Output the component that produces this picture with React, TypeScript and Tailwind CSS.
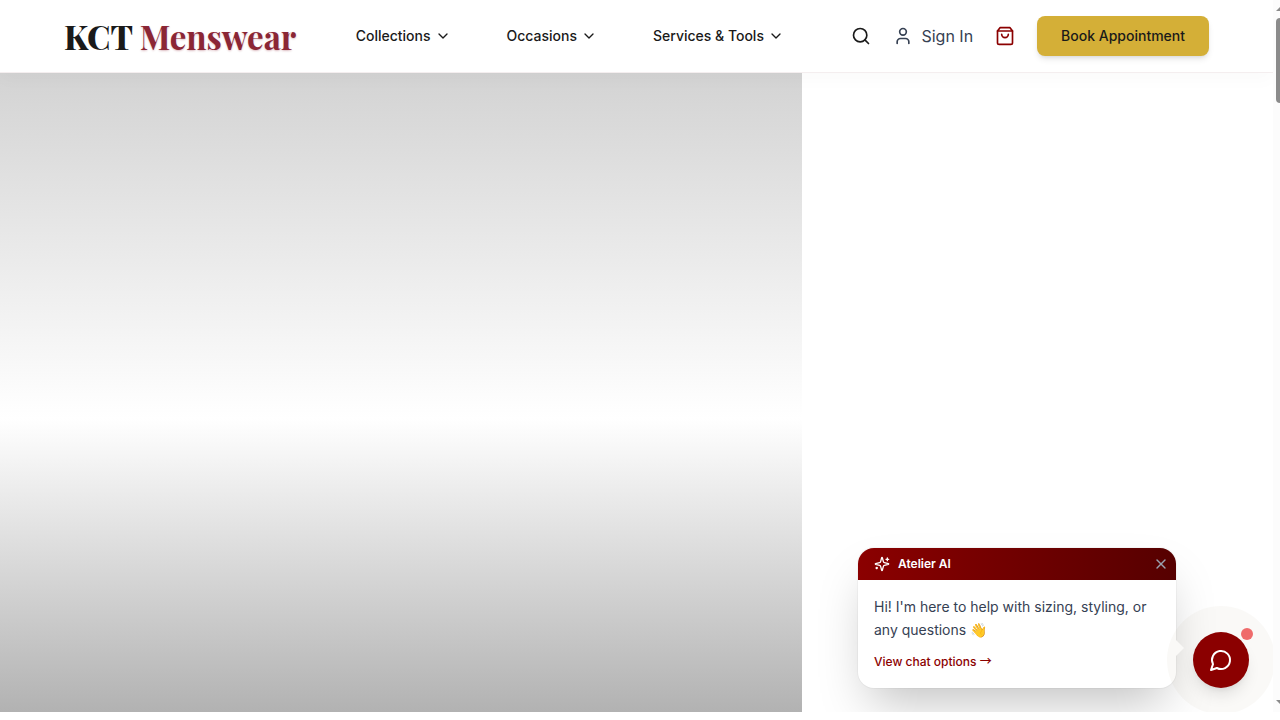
import { ChevronDown, Search, User, X } from "lucide-react";
import type { ReactNode } from "react";

const menus = ["Collections", "Occasions", "Services & Tools"];

function Icon({ className, children }: { className: string; children: ReactNode }) {
  return (
    <svg viewBox="0 0 24 24" fill="none" stroke="currentColor" strokeWidth="2" strokeLinecap="round" strokeLinejoin="round" aria-hidden="true" className={className}>
      {children}
    </svg>
  );
}

function Header() {
  return (
    <header className="relative z-10 flex h-[73px] shrink-0 items-center border-b border-[#f4eeef] bg-white pr-16 pl-16 shadow-[0_8px_16px_rgba(0,0,0,0.02)]">
      <a href="#home" className="font-['Playfair_Display','Liberation_Serif',serif] text-[33px] leading-10 font-extrabold whitespace-nowrap text-[#1a1a1a]">
        KCT <span className="font-bold text-[#8b2635] [text-shadow:0_1px_2px_rgba(139,38,53,0.3)]">Menswear</span>
      </a>
      <nav aria-label="Main" className="ml-auto flex items-center gap-14">
        {menus.map((label) => (
          <button key={label} type="button" className="flex items-center gap-1 text-sm font-medium whitespace-nowrap text-[#1a1a1a]">
            {label}
            <ChevronDown className="size-4" />
          </button>
        ))}
      </nav>
      <div className="ml-auto flex items-center gap-[14px]">
        <button type="button" aria-label="Search" className="p-2">
          <Search className="size-5 text-[#1a1a1a]" />
        </button>
        <a href="#sign-in" className="flex items-center gap-2 whitespace-nowrap text-gray-700">
          <User className="size-5" />
          Sign In
        </a>
        <button type="button" aria-label="Shopping bag" className="p-2 text-[#8b0000]">
          <Icon className="size-5">
            <path d="M6 2 3 6v14a2 2 0 0 0 2 2h14a2 2 0 0 0 2-2V6l-3-4Z" />
            <path d="M3 6h18" />
            <path d="M16 10a4 4 0 0 1-8 0" />
          </Icon>
        </button>
        <button type="button" className="h-10 rounded-lg bg-[#d4af37] px-6 text-sm font-medium whitespace-nowrap text-[#1a1a1a] shadow-md">
          Book Appointment
        </button>
      </div>
    </header>
  );
}

function ChatPrompt() {
  return (
    <section aria-label="Atelier AI" className="relative w-[318px] rounded-2xl bg-white shadow-2xl ring-1 ring-black/[0.03]">
      <div className="flex h-8 items-center rounded-t-2xl bg-linear-to-r from-[#8b0000] to-[#560000] pr-[7px] pl-4 text-white">
        <Icon className="size-4">
          <path d="M9.937 15.5A2 2 0 0 0 8.5 14.063l-6.135-1.582a.5.5 0 0 1 0-.962L8.5 9.936A2 2 0 0 0 9.937 8.5l1.582-6.135a.5.5 0 0 1 .963 0L14.063 8.5A2 2 0 0 0 15.5 9.937l6.135 1.581a.5.5 0 0 1 0 .964L15.5 14.063a2 2 0 0 0-1.437 1.437l-1.582 6.135a.5.5 0 0 1-.963 0z" />
          <path d="M20 3v4" />
          <path d="M22 5h-4" />
          <path d="M4 17v2" />
          <path d="M5 18H3" />
        </Icon>
        <h2 className="ml-2 text-xs font-semibold">Atelier AI</h2>
        <button type="button" aria-label="Close" className="ml-auto text-gray-400">
          <X className="size-4" />
        </button>
      </div>
      <div className="px-4 pt-[15px] pb-[18px]">
        <p className="text-sm leading-[23px] text-gray-700">
          Hi! I'm here to help with sizing, styling, or any questions 👋
        </p>
        <a href="#chat" className="mt-[13px] block text-xs font-medium text-[#8b0000]">
          View chat options <span className="font-['Noto_Sans_CJK_JP',sans-serif] leading-none">→</span>
        </a>
      </div>
      <span className="absolute right-[-8px] bottom-8 border-y-8 border-l-8 border-y-transparent border-l-white" />
    </section>
  );
}

function ChatWidget() {
  return (
    <div className="absolute right-6 bottom-6 flex items-end gap-[17px]">
      <ChatPrompt />
      <div className="relative size-14">
        <span className="absolute -inset-[26px] rounded-full bg-[#8b6b3b]/[0.04]" />
        <button type="button" aria-label="Open chat" className="relative flex size-14 items-center justify-center rounded-full bg-[#8b0000] text-white shadow-lg">
          <Icon className="size-6">
            <path d="M7.9 20A9 9 0 1 0 4 16.1L2 22Z" />
          </Icon>
        </button>
        <span className="absolute -top-1 -right-1 size-3 rounded-full bg-[#ef6b6b]" />
      </div>
    </div>
  );
}

function ScrollTrack() {
  return (
    <div aria-hidden="true" className="flex w-[7px] shrink-0 flex-col items-end overflow-hidden bg-[#fcfcfc]">
      <svg viewBox="0 0 4 4" className="mt-[7px] h-1 w-1 shrink-0 fill-[#8b8b8b]"><path d="M4 0v4H0z" /></svg>
      <span className="mt-[7px] h-[85px] w-1 rounded-l bg-[#8b8b8b]" />
      <svg viewBox="0 0 4 4" className="mt-auto mb-2 h-1 w-1 shrink-0 fill-[#8b8b8b]"><path d="M0 0h4v4z" /></svg>
    </div>
  );
}

export default function App() {
  return (
    <div className="flex h-screen bg-white pb-2 font-['Inter','Liberation_Sans',sans-serif]">
      <div className="relative flex min-w-0 flex-1 flex-col overflow-hidden">
        <Header />
        <main className="flex flex-1">
          <div className="w-[63%] bg-[linear-gradient(to_bottom,#d3d3d3_0%,#ffffff_54%,#b2b2b2_100%)]" />
        </main>
        <ChatWidget />
      </div>
      <ScrollTrack />
    </div>
  );
}
